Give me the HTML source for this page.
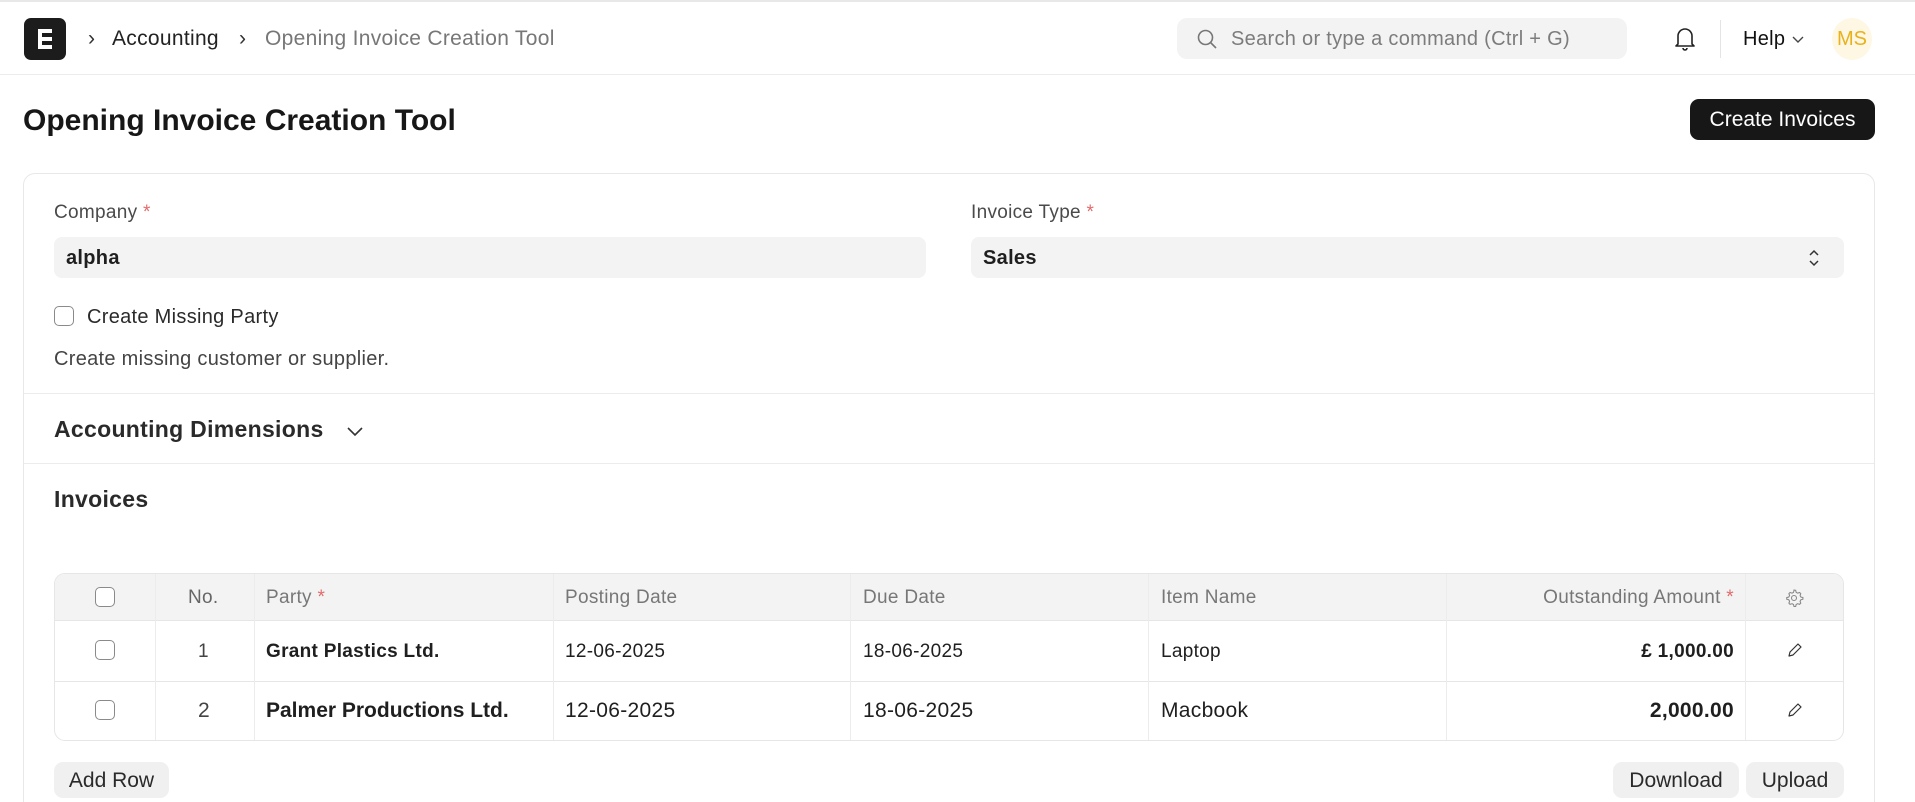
<!DOCTYPE html>
<html><head><meta charset="utf-8"><style>
*{box-sizing:border-box;margin:0;padding:0}
html,body{width:1915px;height:802px;overflow:hidden}
body{background:#fff;font-family:"Liberation Sans",sans-serif;color:#1f1f1f;position:relative;letter-spacing:0.3px}
.a{position:absolute}
.nav{left:0;top:0;width:1915px;height:75px;border-top:2px solid #e8e8e8;border-bottom:1px solid #ececec}
.logo{left:24px;top:18px;width:42px;height:42px;background:#1c1c1c;border-radius:7px}
.crumb{top:27px;font-size:21px;line-height:24px}
.search{left:1177px;top:18px;width:450px;height:41px;background:#f3f3f3;border-radius:10px;color:#7c7c7c;font-size:20px;line-height:42px;padding-left:54px}
.title{left:23px;top:104px;font-size:30px;font-weight:bold;color:#171717;letter-spacing:0}
.btn{left:1690px;top:99px;width:185px;height:41px;background:#171717;color:#fff;border-radius:9px;font-size:21px;line-height:42px;text-align:center;letter-spacing:0}
.card{left:23px;top:173px;width:1852px;height:629px;border:1px solid #e8e8e8;border-bottom:none;border-radius:12px 12px 0 0}
.lbl{font-size:19px;color:#4a4a4a}
.req{color:#e36b6b}
.inp{height:41px;background:#f3f3f3;border-radius:8px;font-size:20px;font-weight:bold;line-height:42px;padding-left:12px;color:#1f1f1f}
.hr{left:24px;width:1850px;height:1px;background:#ececec}
.sec{font-size:23px;font-weight:bold;color:#2a2a2a}
.tbl{left:54px;top:573px;width:1790px;height:168px;border:1px solid #e6e6e6;border-radius:11px;overflow:hidden}
.th{left:0;top:0;width:1790px;height:47px;background:#f3f3f3;border-bottom:1px solid #e6e6e6}
.vl{width:1px;background:#ececec;top:0;height:168px}
.cell{font-size:19px;line-height:20px}
.cb{width:20px;height:20px;border:1.5px solid #8a8a8a;border-radius:5px;background:#fff}
.gbtn{height:36px;background:#f0f0f0;border-radius:9px;font-size:21px;line-height:37px;text-align:center;color:#2a2a2a;letter-spacing:0}
</style></head><body>
<div class="a nav"></div>
<div class="a logo"><div class="a" style="left:14px;top:11px;width:14px;height:20px;border:4px solid #fff;border-right:none"></div><div class="a" style="left:18px;top:19px;width:10px;height:4px;background:#fff"></div></div>
<div class="a crumb" style="left:88px;color:#333">›</div>
<div class="a crumb" style="left:112px;color:#222">Accounting</div>
<div class="a crumb" style="left:239px;color:#333">›</div>
<div class="a crumb" style="left:265px;color:#777">Opening Invoice Creation Tool</div>
<div class="a search">Search or type a command (Ctrl + G)</div>
<svg class="a" style="left:1196px;top:28px" width="22" height="22" viewBox="0 0 22 22"><circle cx="9.5" cy="9.5" r="7" fill="none" stroke="#777" stroke-width="1.6"/><path d="M14.5 14.5L20 20" stroke="#777" stroke-width="1.6"/></svg>
<svg class="a" style="left:1673px;top:25px" width="24" height="28" viewBox="0 0 24 28"><path d="M5 19V11a7 7 0 0 1 14 0v8l2 2H3z" fill="none" stroke="#222" stroke-width="1.6" stroke-linejoin="round"/><path d="M10 23a2 2 0 0 0 4 0" fill="none" stroke="#222" stroke-width="1.6"/></svg>
<div class="a" style="left:1720px;top:20px;width:1px;height:38px;background:#e4e4e4"></div>
<div class="a crumb" style="left:1743px;color:#111;font-size:20px">Help</div>
<svg class="a" style="left:1792px;top:36px" width="12" height="8" viewBox="0 0 12 8"><path d="M1 1l5 5 5-5" fill="none" stroke="#444" stroke-width="1.4"/></svg>
<div class="a" style="left:1832px;top:18px;width:40px;height:42px;border-radius:50%;background:#fdf7e3;color:#e8b21c;font-size:20px;line-height:42px;text-align:center;letter-spacing:0">MS</div>
<div class="a title">Opening Invoice Creation Tool</div>
<div class="a btn">Create Invoices</div>
<div class="a card"></div>
<div class="a lbl" style="left:54px;top:202px">Company <span class="req">*</span></div>
<div class="a inp" style="left:54px;top:237px;width:872px">alpha</div>
<div class="a lbl" style="left:971px;top:202px">Invoice Type <span class="req">*</span></div>
<div class="a inp" style="left:971px;top:237px;width:873px">Sales</div>
<svg class="a" style="left:1808px;top:248px" width="12" height="20" viewBox="0 0 12 20"><path d="M2 7l4-4 4 4M2 13l4 4 4-4" fill="none" stroke="#333" stroke-width="1.5"/></svg>
<div class="a cb" style="left:54px;top:306px"></div>
<div class="a" style="left:87px;top:306px;font-size:20px;color:#2a2a2a">Create Missing Party</div>
<div class="a" style="left:54px;top:348px;font-size:20px;color:#444">Create missing customer or supplier.</div>
<div class="a hr" style="top:393px"></div>
<div class="a sec" style="left:54px;top:416px">Accounting Dimensions</div>
<svg class="a" style="left:346px;top:425px" width="18" height="12" viewBox="0 0 18 12"><path d="M2 3l7 7 7-7" fill="none" stroke="#333" stroke-width="1.6"/></svg>
<div class="a hr" style="top:463px"></div>
<div class="a sec" style="left:54px;top:486px">Invoices</div>
<div class="a tbl">
<div class="a th"></div>
<div class="a" style="left:0;top:107px;width:1790px;height:1px;background:#e6e6e6"></div>
<div class="a vl" style="left:100px"></div><div class="a vl" style="left:199px"></div><div class="a vl" style="left:498px"></div><div class="a vl" style="left:795px"></div><div class="a vl" style="left:1093px"></div><div class="a vl" style="left:1391px"></div><div class="a vl" style="left:1690px"></div>
<div class="a cb" style="left:40px;top:13px"></div>
<div class="a cb" style="left:40px;top:66px"></div>
<div class="a cb" style="left:40px;top:126px"></div>
<div class="a cell" style="left:133px;top:14px;color:#666">No.</div>
<div class="a cell" style="left:211px;top:14px;color:#777">Party <span class="req">*</span></div>
<div class="a cell" style="left:510px;top:14px;color:#777">Posting Date</div>
<div class="a cell" style="left:808px;top:14px;color:#777">Due Date</div>
<div class="a cell" style="left:1106px;top:14px;color:#777">Item Name</div>
<div class="a cell" style="left:1391px;top:14px;width:288px;text-align:right;color:#777">Outstanding Amount <span class="req">*</span></div>
<svg class="a" style="left:1729px;top:14px" width="20" height="20" viewBox="0 0 24 24"><path d="M12 2.5l2 .3.6 2.4 1.8 1 2.3-.8 1.4 1.4-.8 2.3 1 1.8 2.4.6v2l-2.4.6-1 1.8.8 2.3-1.4 1.4-2.3-.8-1.8 1-.6 2.4h-2l-.6-2.4-1.8-1-2.3.8-1.4-1.4.8-2.3-1-1.8-2.4-.6v-2l2.4-.6 1-1.8-.8-2.3 1.4-1.4 2.3.8 1.8-1 .6-2.4z" fill="none" stroke="#888" stroke-width="1.3"/><circle cx="12" cy="12" r="3" fill="none" stroke="#888" stroke-width="1.3"/></svg>
<div class="a cell" style="left:143px;top:68px;color:#444">1</div>
<div class="a cell" style="left:211px;top:68px;font-weight:bold">Grant Plastics Ltd.</div>
<div class="a cell" style="left:510px;top:68px">12-06-2025</div>
<div class="a cell" style="left:808px;top:68px">18-06-2025</div>
<div class="a cell" style="left:1106px;top:68px">Laptop</div>
<div class="a cell" style="left:1391px;top:68px;width:288px;text-align:right;font-weight:bold">£ 1,000.00</div>
<div class="a cell" style="left:143px;top:127px;color:#444;font-size:21px">2</div>
<div class="a cell" style="left:211px;top:127px;font-weight:bold;font-size:21px;letter-spacing:0">Palmer Productions Ltd.</div>
<div class="a cell" style="left:510px;top:127px;font-size:21px">12-06-2025</div>
<div class="a cell" style="left:808px;top:127px;font-size:21px">18-06-2025</div>
<div class="a cell" style="left:1106px;top:127px;font-size:21px">Macbook</div>
<div class="a cell" style="left:1391px;top:127px;width:288px;text-align:right;font-weight:bold;font-size:21px">2,000.00</div>
<svg class="a" style="left:1732px;top:68px" width="16" height="16" viewBox="0 0 16 16"><path d="M11 2l3 3-8 8-4 1 1-4z" fill="none" stroke="#333" stroke-width="1.2" stroke-linejoin="round"/></svg>
<svg class="a" style="left:1732px;top:128px" width="16" height="16" viewBox="0 0 16 16"><path d="M11 2l3 3-8 8-4 1 1-4z" fill="none" stroke="#333" stroke-width="1.2" stroke-linejoin="round"/></svg>
</div>
<div class="a gbtn" style="left:54px;top:762px;width:115px">Add Row</div>
<div class="a gbtn" style="left:1613px;top:762px;width:126px">Download</div>
<div class="a gbtn" style="left:1746px;top:762px;width:98px">Upload</div>
</body></html>
